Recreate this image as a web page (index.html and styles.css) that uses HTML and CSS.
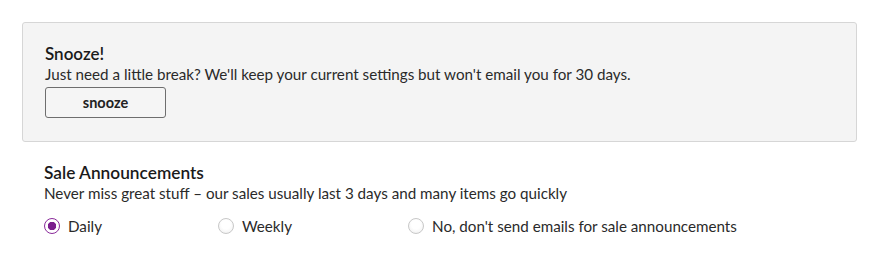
FILE: index.html
```html
<!DOCTYPE html>
<html>
<head>
<meta charset="utf-8">
<link rel="stylesheet" href="styles.css">
</head>
<body>
<div class="page">
  <section class="snooze">
    <h2 class="snooze-title">Snooze!</h2>
    <p class="snooze-text">Just need a little break? We'll keep your current settings but won't email you for 30 days.</p>
    <button class="snooze-btn" type="button">snooze</button>
  </section>
  <section class="pref">
    <h3 class="pref-title">Sale Announcements</h3>
    <p class="pref-text">Never miss great stuff – our sales usually last 3 days and many items go quickly</p>
    <div class="options">
      <label class="option"><span class="radio checked"></span><span class="opt-label">Daily</span></label>
      <label class="option"><span class="radio"></span><span class="opt-label">Weekly</span></label>
      <label class="option"><span class="radio"></span><span class="opt-label">No, don't send emails for sale announcements</span></label>
    </div>
  </section>
</div>
</body>
</html>
```
FILE: styles.css
```css
html, body {
  margin: 0;
  padding: 0;
  background: #ffffff;
}
body {
  font-family: Lato, "Open Sans", sans-serif;
  color: #222222;
}
.page {
  padding: 22px 22px 0 22px;
  width: 835px;
}
.snooze {
  background: #f4f4f4;
  border: 1px solid #d6d6d6;
  border-radius: 3px;
  padding: 21px 22px 22px 22px;
  height: 75px;
}
.snooze-title {
  margin: 0;
  font-size: 17px;
  font-weight: 600;
  line-height: 20px;
  color: #1a1a1a;
}
.snooze-text {
  margin: 0;
  font-size: 15.2px;
  line-height: 20px;
  color: #2a2a2a;
}
.snooze-btn {
  display: block;
  margin-top: 3px;
  width: 121px;
  height: 31px;
  background: #f5f5f5;
  border: 1px solid #6e6e6e;
  border-radius: 3px;
  font-family: inherit;
  font-size: 14.5px;
  font-weight: 700;
  color: #222222;
  padding: 0;
}
.pref {
  padding: 20px 22px 0 22px;
}
.pref-title {
  margin: 0;
  font-size: 17.3px;
  font-weight: 600;
  line-height: 22px;
  color: #1a1a1a;
}
.pref-text {
  margin: 0;
  font-size: 15.2px;
  line-height: 19px;
  color: #2a2a2a;
}
.options {
  display: flex;
  gap: 116px;
  margin-top: 13px;
}
.option {
  display: flex;
  align-items: center;
  gap: 8px;
  font-size: 15.2px;
  line-height: 20px;
  color: #2a2a2a;
}
.radio {
  width: 14px;
  height: 14px;
  border-radius: 50%;
  border: 1px solid #c8c8c8;
  background: radial-gradient(circle at 50% 40%, #ffffff 40%, #ececec 100%);
  box-sizing: content-box;
  display: inline-block;
}
.radio.checked {
  border: 1px solid #8a2a9a;
  background: radial-gradient(circle, #7b1e8e 0 4px, #ffffff 4.5px);
}
```
